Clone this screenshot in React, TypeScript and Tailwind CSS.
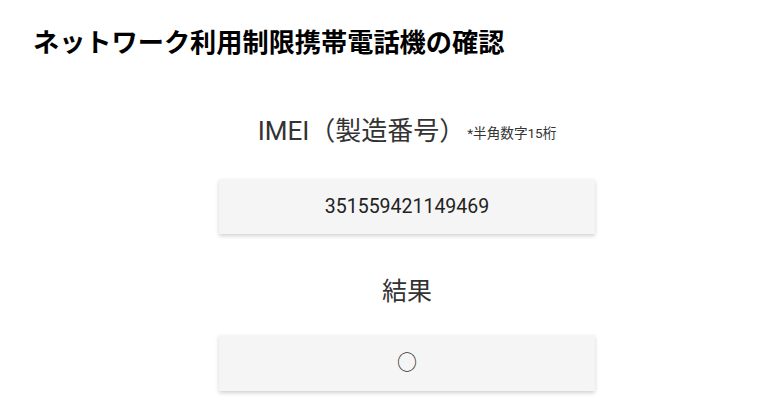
import React from "react";

export default function App() {
  const font = {
    fontFamily: 'Roboto, "Noto Sans CJK JP", sans-serif',
  };
  return (
    <div className="w-[769px] h-[416px] bg-white overflow-hidden" style={font}>
      <h1 className="pl-[33px] pt-[27px] text-[26.2px] leading-[32px] font-bold text-black">
        ネットワーク利用制限携帯電話機の確認
      </h1>
      <div className="ml-[219px] w-[376px] flex flex-col">
        <div className="mt-[56px] h-[32px] flex items-center justify-center text-[#333]">
          <span className="text-[26px] leading-[32px]">IMEI（製造番号）</span>
          <span className="text-[13.6px] leading-[32px] pt-[3px] ml-[2px]">*半角数字15桁</span>
        </div>
        <div className="mt-[32px] h-[55px] bg-[#f5f5f5] shadow-[0_2px_4px_rgba(0,0,0,0.18)] flex items-center justify-center text-[19.5px] text-[#222]">
          351559421149469
        </div>
        <div className="mt-[42px] h-[32px] flex items-center justify-center text-[25px] leading-[32px] text-[#333]">
          結果
        </div>
        <div className="mt-[27px] h-[56px] bg-[#f5f5f5] shadow-[0_2px_4px_rgba(0,0,0,0.18)] flex items-center justify-center text-[20px] text-[#333]">
          ○
        </div>
      </div>
    </div>
  );
}
